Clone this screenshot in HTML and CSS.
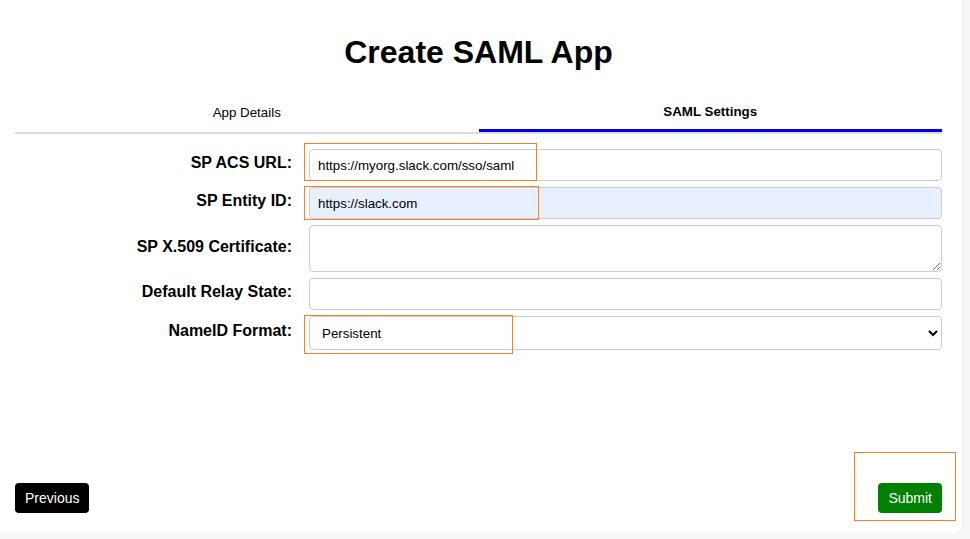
FILE: index.html
```html
<!DOCTYPE html>
<html>
<head>
    <meta charset="UTF-8">
    <title>Create SAML App</title>
    <link rel="stylesheet" href="styles.css">
</head>
<body>
    <div class="card">
        <h1>Create SAML App</h1>

        <div class="tabs">
            <div class="tab">App Details</div>
            <div class="tab active">SAML Settings</div>
        </div>

        <form class="saml-form">
            <label for="acs">SP ACS URL:</label>
            <input id="acs" type="text" value="https://myorg.slack.com/sso/saml">

            <label for="entity">SP Entity ID:</label>
            <input id="entity" class="autofilled" type="text" value="https://slack.com">

            <label for="cert">SP X.509 Certificate:</label>
            <textarea id="cert"></textarea>

            <label for="relay">Default Relay State:</label>
            <input id="relay" type="text">

            <label for="nameid">NameID Format:</label>
            <select id="nameid">
                <option>Persistent</option>
                <option>Email Address</option>
                <option>Transient</option>
            </select>
        </form>

        <div class="footer">
            <button class="btn btn-prev">Previous</button>
            <button class="btn btn-submit">Submit</button>
        </div>

        <!-- annotation boxes -->
        <div class="mark mark-acs"></div>
        <div class="mark mark-entity"></div>
        <div class="mark mark-nameid"></div>
        <div class="mark mark-submit"></div>
    </div>
</body>
</html>
```

FILE: styles.css
```css
:root {
    --page: #f7f7f7;
    --card: #ffffff;
    --text: #000000;
    --border: #cccccc;
    --tab-line: #dddddd;
    --tab-active: #0000ee;
    --autofill: #e8f0fe;
    --submit: #008000;
    --mark: #ff7f27;
}

* {
    box-sizing: border-box;
}

body {
    margin: 0;
    background: var(--page);
    color: var(--text);
    font-family: "Liberation Sans", Arial, sans-serif;
}

.card {
    position: relative;
    width: 962px;
    height: 533px;
    padding: 15px 20px 20px 15px;
    background: var(--card);
    border-radius: 0 0 8px 0;
    box-shadow: 0 0 6px rgba(0, 0, 0, 0.06);
    display: flex;
    flex-direction: column;
}

h1 {
    margin: 19px 0 23px;
    font-size: 32px;
    text-align: center;
}

.tabs {
    display: flex;
    border-bottom: 2px solid var(--tab-line);
}

.tab {
    flex: 1;
    padding: 10px 0;
    font-size: 13.33px;
    line-height: 15px;
    text-align: center;
    border-bottom: 3px solid transparent;
}

.tab:first-child {
    padding: 11px 0 9px;
}

.tab.active {
    font-weight: bold;
    border-bottom-color: var(--tab-active);
}

.saml-form {
    margin-top: 15px;
    display: grid;
    grid-template-columns: 277px 1fr;
    column-gap: 17px;
    row-gap: 6px;
    align-items: center;
}

.saml-form label {
    font-size: 16px;
    font-weight: bold;
    text-align: right;
    padding-bottom: 4px;
}

.saml-form input,
.saml-form textarea,
.saml-form select {
    width: 100%;
    margin: 0;
    padding: 8px;
    font-family: "Liberation Sans", Arial, sans-serif;
    font-size: 13.33px;
    color: var(--text);
    background: #fff;
    border: 1px solid var(--border);
    border-radius: 4px;
}

.saml-form input {
    height: 32px;
}

.saml-form input.autofilled {
    background: var(--autofill);
}

.saml-form textarea {
    height: 47px;
    display: block;
}

.saml-form select {
    height: 34px;
}

.footer {
    margin-top: auto;
    display: flex;
    justify-content: space-between;
}

.btn {
    padding: 7px 10px;
    border: none;
    border-radius: 4px;
    color: #fff;
    font-family: "Liberation Sans", Arial, sans-serif;
    font-size: 14px;
    line-height: 16px;
}

.btn-prev {
    background: #000;
}

.btn-submit {
    background: var(--submit);
}

.mark {
    position: absolute;
    border: 1.5px solid var(--mark);
}

.mark-acs {
    left: 304px;
    top: 143px;
    width: 233px;
    height: 38px;
}

.mark-entity {
    left: 304px;
    top: 186px;
    width: 235px;
    height: 34px;
}

.mark-nameid {
    left: 304px;
    top: 315px;
    width: 209px;
    height: 39px;
}

.mark-submit {
    left: 854px;
    top: 452px;
    width: 102px;
    height: 69px;
}
```
